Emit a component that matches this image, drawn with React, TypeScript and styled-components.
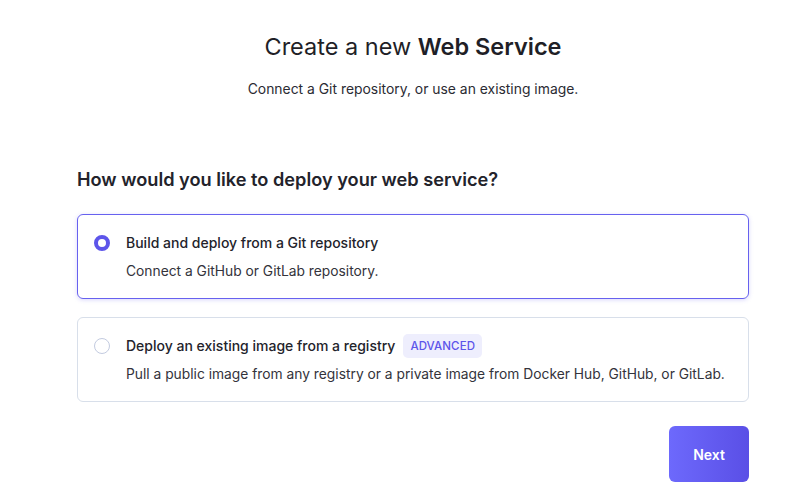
import React, { useState } from "react";
import styled, { createGlobalStyle } from "styled-components";

const Global = createGlobalStyle`
  html, body { margin: 0; padding: 0; background: #fff; }
  body { font-family: Inter, "Noto Sans", sans-serif; color: #25252d; }
`;

const Page = styled.div`
  width: 796px;
  padding: 32px 47px 0 77px;
  box-sizing: border-box;
`;

const Header = styled.header`
  display: flex;
  flex-direction: column;
  align-items: center;
  gap: 17px;
  margin-bottom: 67px;
`;

const Title = styled.h1`
  margin: 0;
  font-size: 23.5px;
  font-weight: 400;
  line-height: 30px;
  color: #1f1f27;
  b { font-weight: 600; }
`;

const Subtitle = styled.p`
  margin: 0;
  font-size: 13.9px;
  line-height: 20px;
  color: #2b2b33;
`;

const Question = styled.h2`
  margin: 0 0 22px;
  font-size: 18.2px;
  font-weight: 600;
  line-height: 26px;
  color: #23232b;
`;

const Options = styled.div`
  display: flex;
  flex-direction: column;
  gap: 18px;
`;

const Card = styled.label<{ $selected: boolean }>`
  display: grid;
  grid-template-columns: 16px 1fr;
  column-gap: 16px;
  row-gap: 6px;
  align-items: center;
  padding: 16px 16px 17px 16px;
  box-sizing: border-box;
  border-radius: 6px;
  cursor: pointer;
  border: 1px solid ${(p) => (p.$selected ? "#6761ef" : "#d8dfea")};
  box-shadow: ${(p) => (p.$selected ? "0 1px 4px rgba(103, 97, 239, 0.25)" : "none")};
`;

const Radio = styled.span<{ $selected: boolean }>`
  width: 16px;
  height: 16px;
  box-sizing: border-box;
  border-radius: 50%;
  border: ${(p) => (p.$selected ? "4px solid #5d55ea" : "1px solid #c3cbe0")};
  background: #fff;
`;

const OptionTitle = styled.div`
  display: flex;
  align-items: center;
  gap: 8px;
  font-size: 14px;
  font-weight: 500;
  line-height: 24px;
  color: #23232b;
`;

const OptionDesc = styled.div`
  grid-column: 2;
  font-size: 13.8px;
  line-height: 20px;
  white-space: nowrap;
  color: #33333b;
`;

const Badge = styled.span`
  display: inline-flex;
  align-items: center;
  height: 24px;
  padding: 0 7px;
  border-radius: 5px;
  background: #eeeefd;
  color: #5d55ea;
  font-size: 11.5px;
  font-weight: 500;
  letter-spacing: 0.1px;
`;

const Footer = styled.div`
  display: flex;
  justify-content: flex-end;
  margin-top: 24px;
`;

const NextButton = styled.button`
  width: 80px;
  height: 56px;
  border: none;
  border-radius: 6px;
  background: linear-gradient(90deg, #6d69fc 0%, #5a4fe6 100%);
  color: #fff;
  font-family: Inter, "Noto Sans", sans-serif;
  font-size: 14px;
  font-weight: 600;
  cursor: pointer;
`;

const options = [
  {
    id: "git",
    title: "Build and deploy from a Git repository",
    desc: "Connect a GitHub or GitLab repository.",
    badge: null as string | null,
  },
  {
    id: "image",
    title: "Deploy an existing image from a registry",
    desc: "Pull a public image from any registry or a private image from Docker Hub, GitHub, or GitLab.",
    badge: "ADVANCED",
  },
];

export default function App() {
  const [selected, setSelected] = useState("git");
  return (
    <>
      <Global />
      <Page>
        <Header>
          <Title>
            Create a new <b>Web Service</b>
          </Title>
          <Subtitle>Connect a Git repository, or use an existing image.</Subtitle>
        </Header>
        <Question>How would you like to deploy your web service?</Question>
        <Options>
          {options.map((o) => (
            <Card key={o.id} $selected={selected === o.id} onClick={() => setSelected(o.id)}>
              <Radio $selected={selected === o.id} />
              <OptionTitle>
                {o.title}
                {o.badge && <Badge>{o.badge}</Badge>}
              </OptionTitle>
              <OptionDesc>{o.desc}</OptionDesc>
            </Card>
          ))}
        </Options>
        <Footer>
          <NextButton>Next</NextButton>
        </Footer>
      </Page>
    </>
  );
}
